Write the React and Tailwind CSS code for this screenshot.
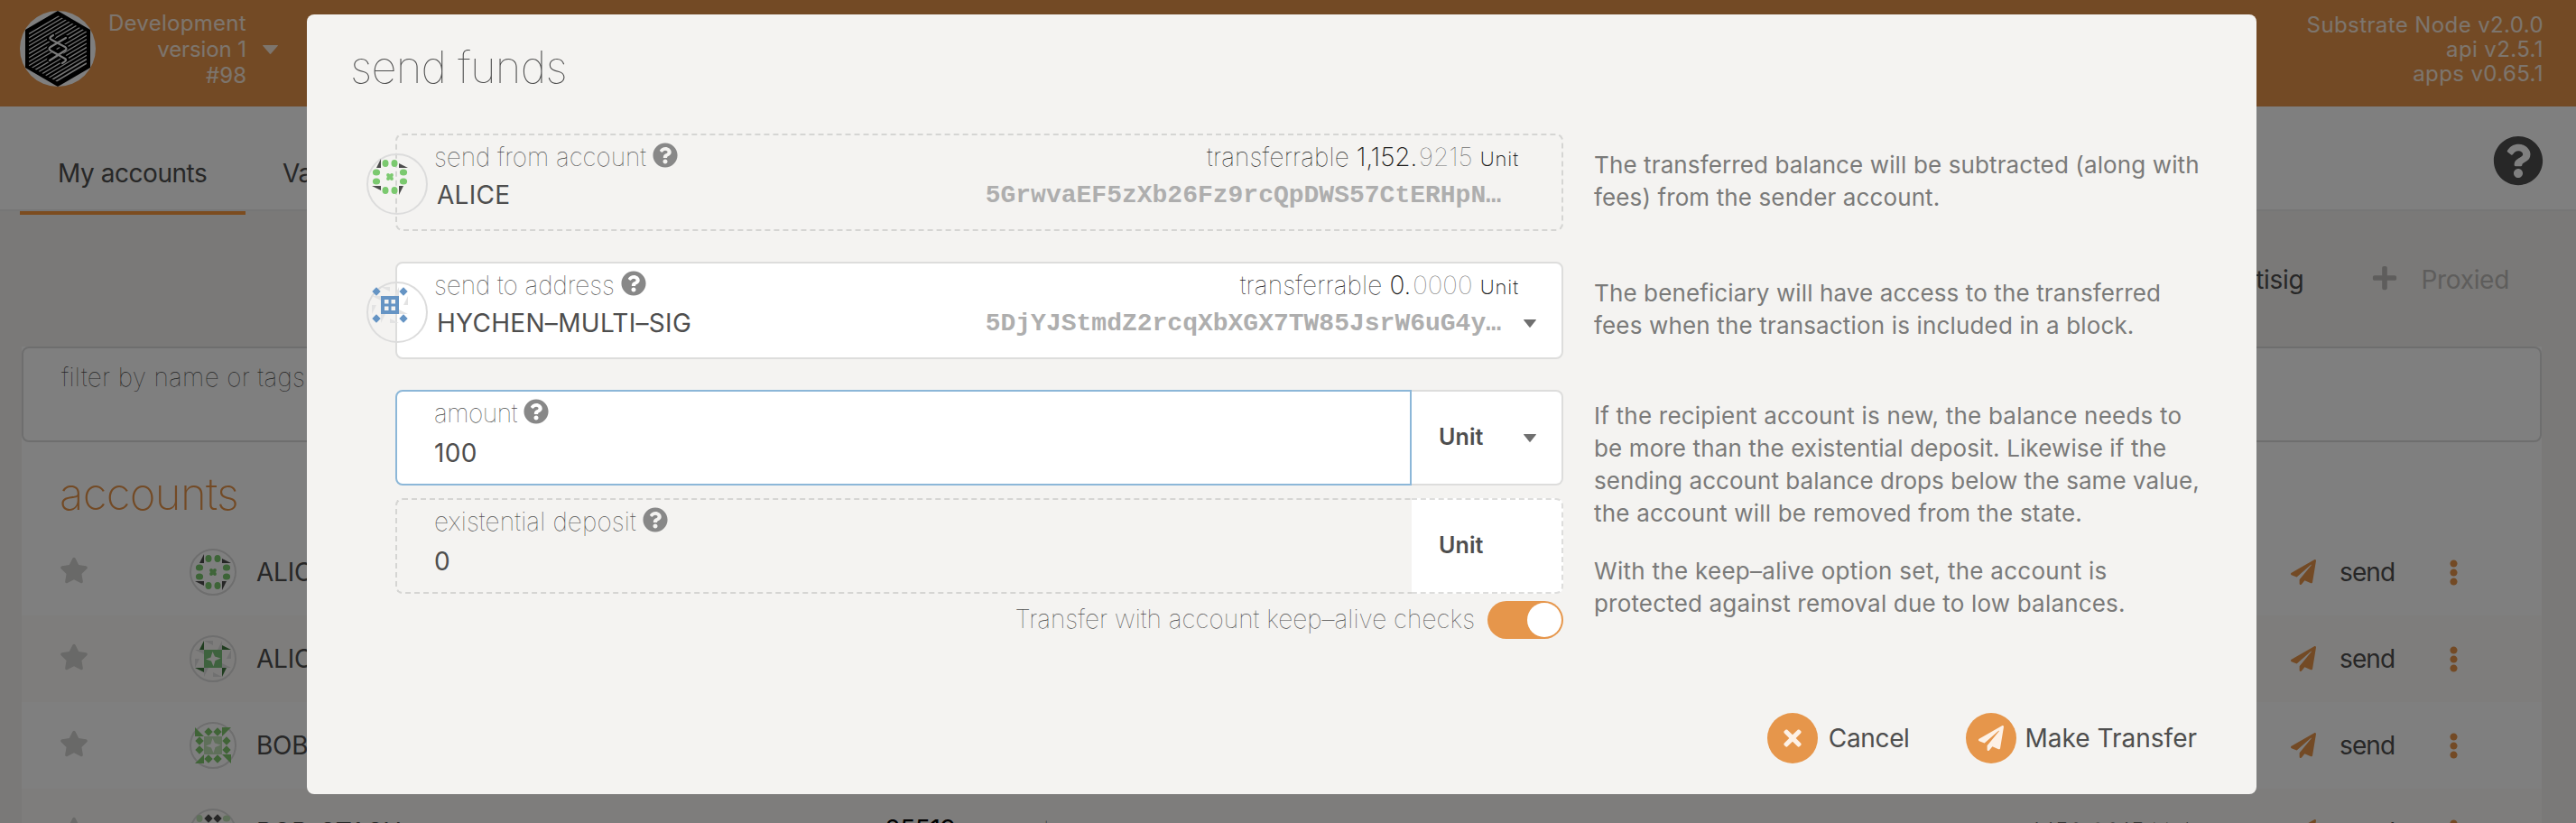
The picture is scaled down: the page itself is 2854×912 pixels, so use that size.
import React from 'react';
import { FaEllipsisV, FaPaperPlane, FaPlus, FaQuestionCircle, FaStar, FaTimes } from 'react-icons/fa';

const QUARTERS = [0, 90, 180, 270];

const SHAPES = {
  ovals: (c, x, y) => <ellipse cx={x + 5} cy={y + 5} rx="3.5" ry="4.1" fill={c} />,
  diamond: (c, x, y) => <path d={`M${x + 5} ${y + 0.3}l4.7 4.7l-4.7 4.7l-4.7-4.7z`} fill={c} />,
  spike: (c) => <path d="M10 0V10H5z" fill={c} />,
  half: (c) => <path d="M0 0V10H10z" fill={c} />,
  shards: (c) => <path d="M10 0H20V5zM30 0V10H25z" fill={c} />,
};

const CENTERS = {
  hash: (c) => (
    <g fill={c}>
      <circle cx="18" cy="18" r="1.9" />
      <circle cx="22" cy="18" r="1.9" />
      <circle cx="18" cy="22" r="1.9" />
      <circle cx="22" cy="22" r="1.9" />
      <path d="M17 19.2h6v1.6h-6zM19.2 17h1.6v6h-1.6z" />
    </g>
  ),
  window: (c) => (
    <path
      fillRule="evenodd"
      fill={c}
      d="M10 10H30V30H10zM14 14V18.5H18.5V14zM21.5 14V18.5H26V14zM14 21.5V26H18.5V21.5zM21.5 21.5V26H26V21.5z"
    />
  ),
  star: (c) => (
    <path
      fillRule="evenodd"
      fill={c}
      d="M10 10H30V30H10zM19.5 12L17.5 18.5L12 20.5L18 22.5L20.5 28.5L22.5 22L28.5 19.5L22 17.5z"
    />
  ),
};

const ICONS = {
  alice: { corner: ['spike', '#4c4c4c'], edge: ['ovals', '#7bc96f'], center: ['hash', '#7bc96f'] },
  multi: { corner: ['diamond', '#6594c4'], edge: ['shards', '#e3e3e3'], center: ['window', '#6594c4'] },
  aliceStash: { corner: ['spike', '#3f7a3f'], edge: ['shards', '#e0e0e0'], center: ['star', '#7cc47c'] },
  bob: { corner: ['half', '#80c86e'], edge: ['diamond', '#80c86e'], center: ['star', '#bfe0b5'] },
  bobStash: { corner: ['ovals', '#bfe0b5'], edge: ['diamond', '#4c4c4c'], center: ['hash', '#80c86e'] },
};

function Identicon({ name, className }) {
  const { corner, edge, center } = ICONS[name];
  return (
    <div className={`rounded-full border-2 border-[#dcdcdc] p-1 ${className}`}>
      <svg width="40" height="40" viewBox="0 0 40 40" className="block">
        {QUARTERS.map((a) => (
          <g key={a} transform={`rotate(${a} 20 20)`}>
            {SHAPES[corner[0]](corner[1], 0, 0)}
            {SHAPES[edge[0]](edge[1], 10, 0)}
            {edge[0] !== 'shards' && SHAPES[edge[0]](edge[1], 20, 0)}
          </g>
        ))}
        {CENTERS[center[0]](center[1])}
      </svg>
    </div>
  );
}

function Caret({ className }) {
  return (
    <svg viewBox="0 0 14 8" preserveAspectRatio="none" className={className}>
      <path d="M0 .4Q0 0 .5 0H13.5Q14 0 14 .4L7.6 7.6Q7 8.2 6.4 7.6z" fill="currentColor" />
    </svg>
  );
}

function SubstrateLogo() {
  const hatch = Array.from({ length: 26 }, (_, i) => i * 4.4 - 2);
  return (
    <svg width="84" height="84" viewBox="0 0 84 84" className="mt-3 shrink-0 rounded-full bg-white">
      <clipPath id="hex">
        <path d="M42 5L74 23V61L42 79L10 61V23z" />
      </clipPath>
      <path d="M42 0L78 21V63L42 84L6 63V21z" fill="#000" />
      <g clipPath="url(#hex)" stroke="#e8e8e8">
        {hatch.map((y, i) => (
          <path key={y} d={`M10 ${y + 10}L74 ${y - 28}`} strokeWidth={i > 18 ? 1.7 : 1.25} />
        ))}
      </g>
      <g fill="none" strokeLinecap="round" strokeLinejoin="round">
        <path d="M37 28L33 31L51 41L33 54M51 30L33 41L51 53L47 56" stroke="#000" strokeWidth="6" />
        <path d="M37 27Q31 30 35 32L50 40Q53 42 50 44L33 55" stroke="#f4f4f4" strokeWidth="2.2" />
        <path d="M51 30L34 40Q31 42 34 44L50 53Q53 55 47 58" stroke="#f4f4f4" strokeWidth="2.2" />
      </g>
    </svg>
  );
}

function Header() {
  return (
    <header className="flex h-[118px] shrink-0 items-start bg-[#e6954b] pr-[36px] pl-[22px] text-2xl text-white/80">
      <SubstrateLogo />
      <div className="w-[167px] pt-[11px] text-right leading-[29px] whitespace-nowrap">
        <div className="tracking-[0.3px]">Development</div>
        <div className="tracking-[-0.1px]">version 1</div>
        <div>#98</div>
      </div>
      <Caret className="mt-[50px] ml-[18px] h-[10px] w-[17px]" />
      <div className="ml-auto pt-[14px] text-right leading-[27px] tracking-[0.4px]">
        <div>Substrate Node v2.0.0</div>
        <div>api v2.5.1</div>
        <div>apps v0.65.1</div>
      </div>
    </header>
  );
}

function Tabs() {
  return (
    <nav className="flex h-[116px] shrink-0 items-center border-b-2 border-[#ececec] bg-white pr-[37px] pl-[22px] text-[28px] tracking-[-0.5px]">
      <div className="relative flex h-full w-[250px] items-end pl-[42px]">
        <span className="mb-[20px] leading-10 tracking-[-0.45px]">My accounts</span>
        <span className="absolute -bottom-1.5 left-0 h-1 w-[250px] bg-[#f8993f]" />
      </div>
      <div className="flex h-full w-[300px] items-end pl-[41px]">
        <span className="mb-[20px] leading-10">Vanity generator</span>
      </div>
      <FaQuestionCircle size={56} className="mt-1.5 -mr-px ml-auto" />
    </nav>
  );
}

function TableRow({ icon, name, alt, type }) {
  return (
    <div className={`flex h-24 shrink-0 items-center pr-[83px] pl-[42px] text-[28px] ${alt ? 'bg-[#fdfbf8]' : 'bg-white'}`}>
      <FaStar size={32} className="mb-1 text-[#d2d2d0]" />
      <Identicon name={icon} className="ml-[112px] h-[52px] w-[52px]" />
      <span className="ml-[22px] w-[672px] tracking-[-0.2px]">{name}</span>
      {type && (
        <>
          <span className="mb-1.5 w-[160px] tracking-[-0.4px] text-black">{type}</span>
          <span className="mb-1.5 font-thin">no tags</span>
        </>
      )}
      <div className="ml-auto flex items-center">
        {type && <span className="mr-[105px] font-thin">1,152.9215 Unit</span>}
        <FaPaperPlane size={28} className="text-[#e6954b]" />
        <span className="ml-[26px] w-[112px] tracking-[-0.9px]">send</span>
        <FaEllipsisV size={29} className="text-[#e6954b]" />
      </div>
    </div>
  );
}

function AccountsPage() {
  return (
    <div className="flex h-[912px] flex-col overflow-hidden bg-[#f5f3f0] text-[#4e4e4e]">
      <Header />
      <Tabs />
      <div className="flex h-[150px] shrink-0 items-start justify-end pt-[56px] pr-[74px] text-[28px] leading-10 tracking-[-0.3px]">
        <FaPlus size={30} className="mt-[3px] mr-[26px]" />
        <span className="mr-[75px]">Multisig</span>
        <div className="flex text-[#bdbbb8]">
          <FaPlus size={30} className="mt-[3px] mr-[25px]" />
          <span>Proxied</span>
        </div>
      </div>
      <div className="mx-[24px] mr-[38px] flex grow flex-col bg-white">
        <div className="h-[106px] shrink-0 rounded-lg border-2 border-[#dcdcdc] pt-[12px] pl-[42px] text-[28px] leading-10 font-thin tracking-[0.3px]">
          filter by name or tags
        </div>
        <h1 className="h-[96px] shrink-0 pt-[28px] pl-[42px] text-[49px] leading-[60px] font-[150] tracking-[-0.7px] text-[#e6954b]">
          accounts
        </h1>
        <TableRow icon="alice" name="ALICE" />
        <TableRow icon="aliceStash" name="ALICE_STASH" alt />
        <TableRow icon="bob" name="BOB" />
        <TableRow icon="bobStash" name="BOB_STASH" alt type="sr25519" />
      </div>
    </div>
  );
}

function Label({ children, className = '' }) {
  return (
    <div className="flex h-10 items-center font-thin">
      <span className={className}>{children}</span>
      <FaQuestionCircle size={28} className="mb-[4px] ml-[7px] text-[#888888]" />
    </div>
  );
}

function AddressField({ icon, label, labelClass, name, whole, decimals, address, editable }) {
  return (
    <div
      className={`relative h-[108px] rounded-lg border-2 pt-1 pl-[41px] text-[28px] leading-10 ${
        editable ? 'border-solid border-[#dddddc] bg-white' : 'border-dashed border-[#d5d5d3]'
      }`}
    >
      <Identicon name={icon} className="absolute top-[20px] -left-[34px] h-[68px] w-[68px]" />
      <div className="flex justify-between pr-[47px]">
        <Label className={labelClass}>{label}</Label>
        <div className="font-thin whitespace-pre text-[#1c1c1c]">
          <span className="tracking-[0.15px]">transferrable </span>
          <span className="mr-[2px] font-[150] tracking-[-0.1px]">{whole}.</span>
          <span className="tracking-[0.05px] text-[#6e6e6e]">{decimals}</span>
          <span className="ml-[1px] text-[22px] font-[150] tracking-[0.9px]"> Unit</span>
        </div>
      </div>
      <div className="-mt-px flex items-center pr-7 pl-[3px]">
        <span className="tracking-[0.3px]">{name}</span>
        <span className="mt-0.5 mr-[25px] ml-auto font-['Liberation_Mono',monospace] font-bold text-[#aeaeae]">{address}</span>
        <Caret className={`mt-px h-[9px] w-[14px] text-[#6f6f6f] ${editable ? '' : 'invisible'}`} />
      </div>
    </div>
  );
}

function AmountField({ label, labelClass, value, active }) {
  return (
    <div className="flex h-[106px] text-[28px] leading-10">
      <div
        className={`w-[1126px] rounded-l-lg border-2 pt-1 pl-[41px] ${
          active ? 'border-[#8cb7d8] bg-white' : 'border-r-0 border-dashed border-[#d5d5d3]'
        }`}
      >
        <Label className={labelClass}>{label}</Label>
        <div className="mt-[4px] tracking-[0.3px]">{value}</div>
      </div>
      <div
        className={`flex grow items-center rounded-r-lg border-2 border-l-0 border-[#dddddc] bg-white pr-7 pl-[30px] ${
          active ? '' : 'border-dashed'
        }`}
      >
        <span className="mb-0.5 text-[25px] font-semibold tracking-[0.1px]">Unit</span>
        {active && <Caret className="mt-px ml-auto h-[9px] w-[14px] text-[#6f6f6f]" />}
      </div>
    </div>
  );
}

function SendFundsModal() {
  return (
    <div className="h-[864px] w-[2160px] rounded-lg bg-[#f4f3f1] text-[#4e4e4e]">
      <h1 className="h-[88px] pt-[29px] pl-[48px] text-[49px] leading-[60px] font-[140] tracking-[-0.75px]">send funds</h1>
      <div className="mt-[44px] flex pl-[98px]">
        <div className="flex w-[1294px] flex-col">
          <AddressField
            icon="alice"
            label="send from account"
            labelClass="tracking-[-0.05px]"
            name="ALICE"
            whole="1,152"
            decimals="9215"
            address="5GrwvaEF5zXb26Fz9rcQpDWS57CtERHpN…"
          />
          <div className="h-[34px]" />
          <AddressField
            icon="multi"
            label="send to address"
            labelClass="tracking-[-0.05px]"
            name="HYCHEN–MULTI–SIG"
            whole="0"
            decimals="0000"
            address="5DjYJStmdZ2rcqXbXGX7TW85JsrW6uG4y…"
            editable
          />
          <div className="h-[34px]" />
          <AmountField label="amount" labelClass="tracking-[-0.45px]" value="100" active />
          <div className="h-[14px]" />
          <AmountField label="existential deposit" labelClass="tracking-[0.15px]" value="0" />
          <div className="mt-2 flex h-[42px] items-center justify-end gap-[14px] text-[28px] font-thin">
            <span className="mb-0.5 tracking-[0.02px]">Transfer with account keep–alive checks</span>
            <div className="flex h-[42px] w-[84px] items-center justify-end rounded-full bg-[#e6964b] pr-0.5">
              <span className="h-[38px] w-[38px] rounded-full bg-white" />
            </div>
          </div>
        </div>
        <div className="ml-[34px] flex flex-col pt-[17px] text-[26px] leading-9 tracking-[0.12px] whitespace-nowrap text-[#7a7a79]">
          <p className="h-[142px]">
            The transferred balance will be subtracted (along with
            <br />
            fees) from the sender account.
          </p>
          <p className="h-[136px]">
            The beneficiary will have access to the transferred
            <br />
            <span className="tracking-[0.16px]">fees when the transaction is included in a block.</span>
          </p>
          <p className="mb-[28px]">
            <span className="tracking-[0.22px]">If the recipient account is new, the balance needs to</span>
            <br />
            be more than the existential deposit. Likewise if the
            <br />
            <span className="tracking-[0.05px]">sending account balance drops below the same value,</span>
            <br />
            <span className="tracking-[0.2px]">the account will be removed from the state.</span>
          </p>
          <p>
            <span className="tracking-[0.28px]">With the keep–alive option set, the account is</span>
            <br />
            <span className="tracking-[0.18px]">protected against removal due to low balances.</span>
          </p>
        </div>
      </div>
      <div className="mt-[82px] flex h-14 items-center justify-end pr-[66px] text-[28px]">
        <span className="flex h-14 w-14 items-center justify-center rounded-full bg-[#e6964b] text-[#fdf1e6]">
          <FaTimes size={28} />
        </span>
        <span className="mr-[62px] ml-[12px] tracking-[-0.35px]">Cancel</span>
        <span className="flex h-14 w-14 items-center justify-center rounded-full bg-[#e6964b] text-[#fdf1e6]">
          <FaPaperPlane size={28} />
        </span>
        <span className="ml-[10px]">Make Transfer</span>
      </div>
    </div>
  );
}

export default function App() {
  return (
    <div className="relative h-[912px] w-[2854px] overflow-hidden font-['Inter',sans-serif]">
      <AccountsPage />
      <div className="absolute inset-0 bg-black/50 pt-4 pl-[340px]">
        <SendFundsModal />
      </div>
    </div>
  );
}
